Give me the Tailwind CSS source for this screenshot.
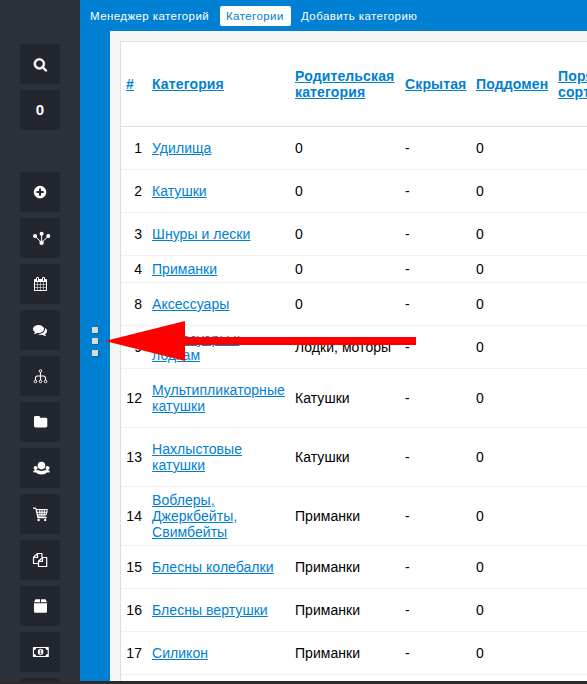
<!DOCTYPE html>
<html lang="ru">
<head>
<meta charset="utf-8">
<title>Категории</title>
<script src="https://cdn.jsdelivr.net/npm/@tailwindcss/browser@4"></script>
</head>
<body class="relative flex h-[684px] w-[587px] flex-col overflow-hidden bg-[#2b2b2b] font-['Liberation_Sans',Arial,sans-serif]">
<div class="flex h-[681px] w-full overflow-hidden">
  <aside class="flex w-20 shrink-0 flex-col items-center gap-1.5 bg-[#2c303b] pt-11 text-white">
    <div class="size-10 shrink-0 bg-[#22262f]"><svg class="size-10" viewBox="0 0 40 40" fill="currentColor"><path stroke="currentColor" stroke-width="40" transform="translate(13.3 13.3) scale(.0079)" d="M1216 832q0-185-131.5-316.5t-316.5-131.5-316.5 131.5-131.5 316.5 131.5 316.5 316.5 131.5 316.5-131.5 131.5-316.5zm512 832q0 52-38 90t-90 38q-54 0-90-38l-343-342q-179 124-399 124-143 0-273.5-55.5t-225-150-150-225-55.5-273.5 55.5-273.5 150-225 225-150 273.5-55.5 273.5 55.5 225 150 150 225 55.5 273.5q0 220-124 399l343 343q37 37 37 90z"/></svg></div>
    <div class="flex size-10 shrink-0 items-center justify-center bg-[#22262f] text-[15px] font-bold">0</div>
    <div class="mt-9 size-10 shrink-0 bg-[#22262f]"><svg class="size-10" viewBox="0 0 40 40" fill="currentColor"><path transform="translate(12.8 12.8) scale(.0081)" d="M1344 960v-128q0-26-19-45t-45-19h-256v-256q0-26-19-45t-45-19h-128q-26 0-45 19t-19 45v256h-256q-26 0-45 19t-19 45v128q0 26 19 45t45 19h256v256q0 26 19 45t45 19h128q26 0 45-19t19-45v-256h256q26 0 45-19t19-45zm320-64q0 209-103 385.5t-279.5 279.5-385.5 103-385.5-103-279.5-279.5-103-385.5 103-385.5 279.5-279.5 385.5-103 385.5 103 279.5 279.5 103 385.5z"/></svg></div>
    <div class="size-10 shrink-0 bg-[#22262f]"><svg class="size-10" viewBox="0 0 40 40" fill="currentColor"><path d="M15 18l6.5 6.7 7-6.7M21.6 16v8" fill="none" stroke="currentColor" stroke-width="1"/><circle cx="15" cy="18" r="2"/><circle cx="21.6" cy="15.8" r="2"/><circle cx="28.3" cy="18" r="2"/><circle cx="21.6" cy="24.7" r="2.2"/></svg></div>
    <div class="size-10 shrink-0 bg-[#22262f]"><svg class="size-10" viewBox="0 0 40 40" fill="currentColor"><path transform="translate(13.5 13) scale(.0078125)" d="M192 1664h288v-288h-288v288zm352 0h320v-288h-320v288zm-352-352h288v-320h-288v320zm352 0h320v-320h-320v320zm-352-384h288v-288h-288v288zm736 736h320v-288h-320v288zm-384-736h320v-288h-320v288zm768 736h288v-288h-288v288zm-384-352h320v-320h-320v320zm-352-864v-288q0-13-9.5-22.5t-22.5-9.5h-64q-13 0-22.5 9.5t-9.5 22.5v288q0 13 9.5 22.5t22.5 9.5h64q13 0 22.5-9.5t9.5-22.5zm736 864h288v-320h-288v320zm-384-384h320v-288h-320v288zm384 0h288v-288h-288v288zm32-480v-288q0-13-9.5-22.5t-22.5-9.5h-64q-13 0-22.5 9.5t-9.5 22.5v288q0 13 9.5 22.5t22.5 9.5h64q13 0 22.5-9.5t9.5-22.5zm384-64v1280q0 52-38 90t-90 38h-1408q-52 0-90-38t-38-90v-1280q0-52 38-90t90-38h128v-96q0-66 47-113t113-47h64q66 0 113 47t47 113v96h384v-96q0-66 47-113t113-47h64q66 0 113 47t47 113v96h128q52 0 90 38t38 90z"/></svg></div>
    <div class="size-10 shrink-0 bg-[#22262f]"><svg class="size-10" viewBox="0 0 40 40" fill="currentColor"><path transform="translate(13 13) scale(.0078125)" d="M1408 768q0 139-94 257t-256.5 186.5-353.5 68.5q-86 0-176-16-124 88-278 128-36 9-86 16h-3q-11 0-20.5-8t-11.5-21q-1-3-1-6.5t.5-6.5 2-6l2.5-5 3.5-5.5 4-5 4.5-5 4-4.5q5-6 23-25t26-29.5 22.5-29 25-38.5 20.5-44q-124-72-195-177t-71-224q0-139 94-257t256.5-186.5 353.5-68.5 353.5 68.5 256.5 186.5 94 257zm384 256q0 120-71 224.5t-195 176.5q10 24 20.5 44t25 38.5 22.5 29 26 29.5 23 25q1 1 4 4.5t4.5 5 4 5 3.5 5.5l2.5 5 2 6 .5 6.5-1 6.5q-3 14-13 22t-22 7q-50-7-86-16-154-40-278-128-90 16-176 16-271 0-472-132 58 4 88 4 161 0 309-45t264-129q125-92 192-212t67-254q0-77-23-152 129 71 204 178t75 230z"/></svg></div>
    <div class="size-10 shrink-0 bg-[#22262f]"><svg class="size-10" viewBox="0 0 40 40" fill="none" stroke="currentColor"><circle cx="20.5" cy="15" r="1.3" stroke-width=".9"/><path d="M20.5 16.3v7.7M15.5 24v-2q0-2 2-2h6q2 0 2 2v2" stroke-width="1.1"/><circle cx="15.5" cy="25.4" r="1.3" stroke-width="1"/><circle cx="20.5" cy="25.4" r="1.3" stroke-width="1"/><circle cx="25.6" cy="25.4" r="1.3" stroke-width="1"/></svg></div>
    <div class="size-10 shrink-0 bg-[#22262f]"><svg class="size-10" viewBox="0 0 40 40" fill="currentColor"><path d="M14 15.5q0-1.5 1.5-1.5h3q1.5 0 1.5 1.5v.5h5.7q1.6 0 1.6 1.6v7.8q0 1.6-1.6 1.6h-10.1q-1.6 0-1.6-1.6z" transform="matrix(1 0 0 .88 0 1.7)"/></svg></div>
    <div class="size-10 shrink-0 bg-[#22262f]"><svg class="size-10" viewBox="0 0 40 40" fill="currentColor"><circle cx="21.5" cy="17.6" r="3.8"/><circle cx="15.6" cy="20" r="2"/><circle cx="27.5" cy="20" r="2"/><path d="M13 24.2q0-2 2.5-2.2l3 .3q3 1.6 6 0l3-.3q2.5.2 2.5 2.2l-3 .2q-1.5 2.1-5.5 2.1t-5.5-2.1z"/></svg></div>
    <div class="size-10 shrink-0 bg-[#22262f]"><svg class="size-10" viewBox="0 0 40 40" fill="none" stroke="currentColor"><path d="M13 14.2h2.2q.7 0 .9 1l1.9 8.3h8.6" stroke-width="1.3"/><path d="M16 15.5h11.3M17 18.2h9.8M17.2 20.8h8.9M19.7 15.5l.3 5.3M22 15.5v5.3M24.4 15.5l-.2 5.3M27 15v2.8l-1.1 3.3" stroke-width="1.1"/><path d="M17.3 22.2l8.2-.4" stroke-width=".9"/><circle cx="18.6" cy="26" r="1.2" fill="currentColor" stroke="none"/><circle cx="25.2" cy="26" r="1.2" fill="currentColor" stroke="none"/></svg></div>
    <div class="size-10 shrink-0 bg-[#22262f]"><svg class="size-10" viewBox="0 0 40 40" fill="none" stroke="currentColor" stroke-width="1.2" stroke-linejoin="round"><path d="M18.5 23.5h-5v-6.2l4-3.8h4.4v3.6M17.5 13.7v3.8h-3.8M22.5 17.5h4.2v9h-8.2v-5.2l4-3.8zM22.5 17.5v3.8h-3.8"/></svg></div>
    <div class="size-10 shrink-0 bg-[#22262f]"><svg class="size-10" viewBox="0 0 40 40" fill="currentColor"><path d="M15.5 13.3h4.5v3h-6zM21 13.3h4.5l1.5 3h-6zM14 17.2h13v8.3q0 1.3-1.3 1.3h-10.4q-1.3 0-1.3-1.3z"/></svg></div>
    <div class="size-10 shrink-0 bg-[#22262f]"><svg class="size-10" viewBox="0 0 40 40" fill="currentColor"><path fill-rule="evenodd" d="M13.5 15h14.7q.6 0 .6.6v9q0 .5-.6.5h-14.7q-.6 0-.6-.5v-9q0-.6.6-.6zM16.3 16q-.2 2-2.3 2.2v3.7q2.1.1 2.3 2.2h9.1q.2-2.1 2.3-2.2v-3.7q-2.1-.2-2.3-2.2z"/><ellipse cx="20.6" cy="20" rx="2.8" ry="3.2"/><path d="M19.6 18.8l1.1-.8v3.6M19.3 21.9h2.8" fill="none" stroke="#22262f" stroke-width=".8"/></svg></div>
    <div class="size-10 shrink-0 bg-[#22262f]"></div>
  </aside>

  <main class="flex w-[507px] shrink-0 flex-col bg-[#0080d2]">
    <nav class="flex h-[31px] shrink-0 items-start pt-1.5 pl-1 text-[11.5px] leading-5 tracking-[0.42px] whitespace-nowrap text-white">
      <a class="w-[136px] px-1.5">Менеджер категорий</a>
      <a class="w-[71px] rounded-xs bg-white px-1.5 text-[#0080d2]">Категории</a>
      <a class="ml-1 px-1.5">Добавить категорию</a>
    </nav>
    <div class="flex min-h-0 flex-1">
      <div class="flex w-[30px] shrink-0 flex-col items-start gap-[5px] pt-[296px] pl-3">
        <i class="size-1.5 bg-[#d9d9d9] shadow-[1px_1px_1px_#0003]"></i>
        <i class="size-1.5 bg-[#d9d9d9] shadow-[1px_1px_1px_#0003]"></i>
        <i class="mt-px size-1.5 bg-[#d9d9d9] shadow-[1px_1px_1px_#0003]"></i>
      </div>
      <div class="flex-1 overflow-hidden bg-[#f7f7f7] pt-2.5 pl-2.5">
        <table class="w-[600px] table-fixed border-separate border-spacing-0 border-t border-l border-[#dedede] bg-white text-sm leading-4 tracking-[0.05px] text-black [&_a]:text-[#0080d2] [&_a]:underline [&_td]:border-b [&_td]:border-[#f0f0f0] [&_td]:px-[5px] [&_td]:py-0 [&_th]:border-b [&_th]:border-[#dedede] [&_th]:px-[5px] [&_th]:py-0 [&_th]:text-left [&_th]:tracking-[0.14px] [&_td:first-child]:text-right">
          <colgroup><col class="w-[26px]"><col class="w-[143px]"><col class="w-[110px]"><col class="w-[71px]"><col class="w-[82px]"><col></colgroup>
          <thead>
            <tr class="h-[85px]"><th><a>#</a></th><th><a>Категория</a></th><th class="whitespace-nowrap"><a>Родительская<br>категория</a></th><th><a>Скрытая</a></th><th><a>Поддомен</a></th><th><a>Порядок<br>сортировки</a></th></tr>
          </thead>
          <tbody>
            <tr class="h-[43px]"><td>1</td><td><a>Удилища</a></td><td>0</td><td>-</td><td>0</td><td></td></tr>
            <tr class="h-[43px]"><td>2</td><td><a>Катушки</a></td><td>0</td><td>-</td><td>0</td><td></td></tr>
            <tr class="h-[43px]"><td>3</td><td><a>Шнуры и лески</a></td><td>0</td><td>-</td><td>0</td><td></td></tr>
            <tr class="h-[27px]"><td>4</td><td><a>Приманки</a></td><td>0</td><td>-</td><td>0</td><td></td></tr>
            <tr class="h-[43px]"><td>8</td><td><a>Аксессуары</a></td><td>0</td><td>-</td><td>0</td><td></td></tr>
            <tr class="h-[43px]"><td>9</td><td><a>Аксессуары к<br>лодкам</a></td><td class="whitespace-nowrap">Лодки, моторы</td><td>-</td><td>0</td><td></td></tr>
            <tr class="h-[59px]"><td>12</td><td class="whitespace-nowrap"><a>Мультипликаторные<br>катушки</a></td><td>Катушки</td><td>-</td><td>0</td><td></td></tr>
            <tr class="h-[59px]"><td>13</td><td><a>Нахлыстовые<br>катушки</a></td><td>Катушки</td><td>-</td><td>0</td><td></td></tr>
            <tr class="h-[59px]"><td>14</td><td><a>Воблеры,<br>Джеркбейты,<br>Свимбейты</a></td><td>Приманки</td><td>-</td><td>0</td><td></td></tr>
            <tr class="h-[43px]"><td>15</td><td><a>Блесны колебалки</a></td><td>Приманки</td><td>-</td><td>0</td><td></td></tr>
            <tr class="h-[43px]"><td>16</td><td><a>Блесны вертушки</a></td><td>Приманки</td><td>-</td><td>0</td><td></td></tr>
            <tr class="h-[43px]"><td>17</td><td><a>Силикон</a></td><td>Приманки</td><td>-</td><td>0</td><td></td></tr>
            <tr class="h-[43px]"><td></td><td></td><td></td><td></td><td></td><td></td></tr>
          </tbody>
        </table>
      </div>
    </div>
  </main>
</div>
<!-- Arrow pointing at the panel handle -->
<svg class="absolute top-[320px] left-[105px] h-[42px] w-[312px]" viewBox="0 0 312 42" fill="#f00"><path d="M0 21L80 1v16h231v8H80v16z"/></svg>
</body>
</html>
